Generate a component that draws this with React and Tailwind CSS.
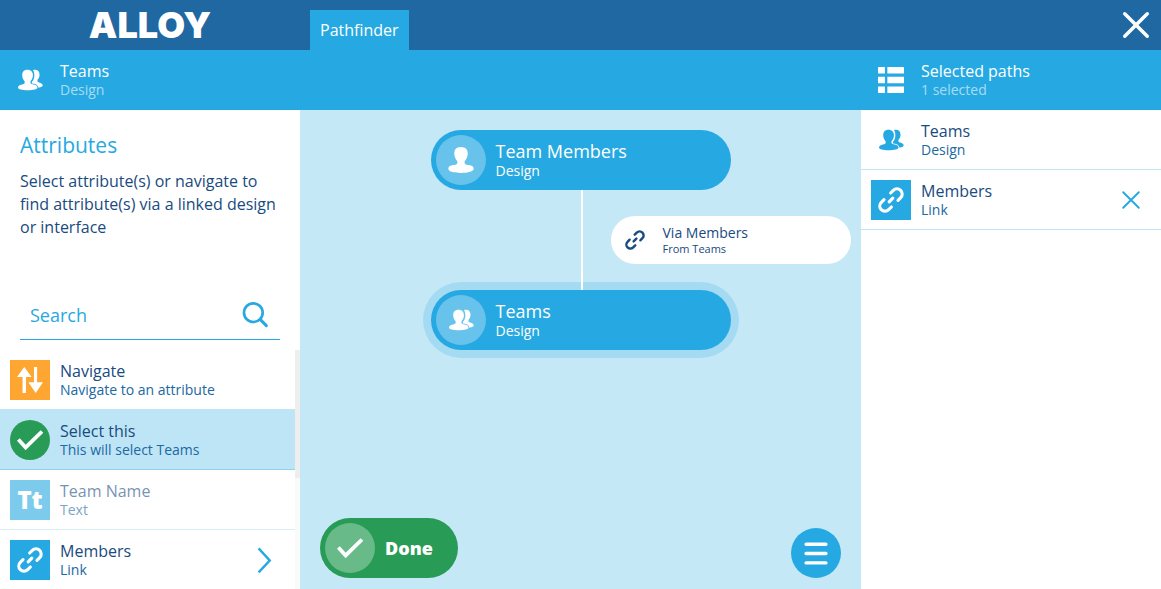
import clsx from "clsx";

const attributes = [
  { id: "navigate", title: "Navigate", subtitle: "Navigate to an attribute", icon: "navigate" },
  { id: "select", title: "Select this", subtitle: "This will select Teams", icon: "select", selected: true },
  { id: "name", title: "Team Name", subtitle: "Text", icon: "text", disabled: true },
  { id: "members", title: "Members", subtitle: "Link", icon: "link", expandable: true },
];

// Icons are drawn on a 75 unit grid
function Icon({ children, className = "size-[26px]" }) {
  return (
    <svg viewBox="0 0 75 75" className={clsx("shrink-0 overflow-visible", className)} fill="none" aria-hidden="true">
      {children}
    </svg>
  );
}

function TeamIcon() {
  return (
    <Icon>
      <g fill="currentColor">
        <path d="M30 8c10 0 16 6 16 16 0 7-3 13-7 17v6c2 3 8 3 14 5 5 2 6 5 6 8 0 4-12 7-28 7S3 64 3 60c0-3 1-6 7-8 6-2 10-2 12-5v-6c-4-4-7-10-7-17C15 14 20 8 30 8Z" />
        <path d="M46 9c2-1 4-1 6-1 8 0 13 5 13 14 0 6-2 11-6 15v5c2 3 6 3 10 5 4 2 5 4 5 6 0 4-4 6-12 7-1-6-5-9-10-11-5-1-8-1-9-3v-3c4-4 7-11 7-18 0-7-1-12-4-16Z" />
      </g>
    </Icon>
  );
}

function PersonIcon() {
  return (
    <Icon>
      <path
        fill="currentColor"
        d="M37 0C51 0 57 8 57 19c0 9-4 17-9 22v6c1 4 8 5 15 6 8 2 11 4 11 10 0 8-15 12-37 12S1 71 1 63c0-6 3-8 11-10 7-1 14-2 15-6v-6c-5-5-9-13-9-22C18 8 24 0 37 0Z"
      />
    </Icon>
  );
}

function LinkIcon({ className }) {
  return (
    <Icon className={className}>
      <g transform="rotate(-45 37.5 37.5)" stroke="currentColor" strokeWidth="9" strokeLinecap="round">
        <path d="M51 22.500H62a15 15 0 0 1 0 30H51" />
        <path d="M24 52.500H13a15 15 0 0 1 0-30H24" />
        <path d="M30 37.500h15" />
      </g>
    </Icon>
  );
}

function ListIcon() {
  return (
    <Icon>
      <path
        fill="currentColor"
        d="M2 0h18v19H0V2ZM27 0h46l2 2v17H27ZM0 28h20v19H0ZM27 28h48v19H27ZM0 56h20v19H2l-2-2ZM27 56h48v17l-2 2H27Z"
      />
    </Icon>
  );
}

function NavigateIcon() {
  return (
    <Icon>
      <path fill="currentColor" d="M21 0 42 29H26v46H16V29H0ZM49 0h9v44h17L54 75 33 44h16Z" />
    </Icon>
  );
}

function CheckIcon() {
  return (
    <Icon>
      <path d="M4 36 25 59 72 13" stroke="currentColor" strokeWidth="11" />
    </Icon>
  );
}

function MenuIcon() {
  return (
    <Icon>
      <path d="M9 12h57M9 39h57M9 66h57" stroke="currentColor" strokeWidth="10" strokeLinecap="round" />
    </Icon>
  );
}

function SearchIcon() {
  return (
    <Icon className="size-[25px]">
      <circle cx="31" cy="32" r="28" stroke="currentColor" strokeWidth="8" />
      <path d="M52 53 70 71" stroke="currentColor" strokeWidth="9" strokeLinecap="round" />
    </Icon>
  );
}

function CrossIcon({ className, strokeWidth }) {
  return (
    <Icon className={className}>
      <path d="M5 5 70 70M70 5 5 70" stroke="currentColor" strokeWidth={strokeWidth} strokeLinecap="round" />
    </Icon>
  );
}

function AttributeIcon({ type }) {
  const box = "flex size-10 shrink-0 items-center justify-center text-white";
  if (type === "navigate") return <span className={clsx(box, "bg-[#ffa632]")}><NavigateIcon /></span>;
  if (type === "select") return <span className={clsx(box, "rounded-full bg-[#289c56]")}><CheckIcon /></span>;
  if (type === "text") return <span className={clsx(box, "bg-[#26a9e2] text-2xl font-extrabold")}>Tt</span>;
  if (type === "link") return <span className={clsx(box, "bg-[#26a9e2]")}><LinkIcon /></span>;
  return <span className="flex size-10 shrink-0 items-center justify-center text-[#26a9e2]"><TeamIcon /></span>;
}

function RowText({ title, subtitle }) {
  return (
    <span className="block min-w-0 flex-1 text-left">
      <span className="block text-base leading-5 text-[#184b80]">{title}</span>
      <span className="block text-sm leading-[18px] text-[#2068a2]">{subtitle}</span>
    </span>
  );
}

function PanelHeader({ icon, title, subtitle, className }) {
  return (
    <div className={clsx("flex h-[60px] shrink-0 items-center gap-[10px] px-[10px] text-white", className)}>
      <span className="flex size-10 items-center justify-center">{icon}</span>
      <div>
        <h2 className="text-base leading-5">{title}</h2>
        <p className="text-sm leading-[18px] text-white/60">{subtitle}</p>
      </div>
    </div>
  );
}

function AttributeRow({ item }) {
  return (
    <li>
      <button
        type="button"
        disabled={item.disabled}
        className={clsx(
          "flex h-[60px] w-full items-center gap-[10px] border-b border-[#26a9e2]/30 px-[10px]",
          item.selected && "bg-[#26a9e2]/30",
          item.disabled && "opacity-60"
        )}
      >
        <AttributeIcon type={item.icon} />
        <RowText title={item.title} subtitle={item.subtitle} />
        {item.expandable && (
          <span className="mr-2 text-[#26a9e2]">
            <Icon>
              <path d="M22 4 54 39 22 73" stroke="currentColor" strokeWidth="7" />
            </Icon>
          </span>
        )}
      </button>
    </li>
  );
}

function DesignNode({ icon, title, active }) {
  return (
    <button
      type="button"
      className={clsx(
        "flex h-[60px] w-[300px] items-center gap-[10px] rounded-full bg-[#26a9e2] p-[5px] text-left text-white",
        active && "ring-8 ring-[#26a9e2]/20"
      )}
    >
      <span className="flex size-[50px] items-center justify-center rounded-full bg-white/30">{icon}</span>
      <span className="block">
        <span className="block text-lg leading-[22px]">{title}</span>
        <span className="block text-sm leading-[18px]">Design</span>
      </span>
    </button>
  );
}

export default function App() {
  return (
    <div className="flex h-screen flex-col overflow-hidden bg-white font-['Open_Sans',sans-serif]">
      {/* Top bar */}
      <header className="flex h-[50px] shrink-0 items-end bg-[#2068a2] text-white">
        <div className="flex h-full w-[300px] items-center justify-center font-['Inter',sans-serif] text-4xl font-black">
          ALLOY
        </div>
        <nav className="flex-1 px-[10px]">
          <button type="button" className="h-10 bg-[#26a9e2] px-[10px] text-base">
            Pathfinder
          </button>
        </nav>
        <button type="button" aria-label="Close" className="flex size-[50px] items-center justify-center">
          <CrossIcon strokeWidth={10} />
        </button>
      </header>

      {/* Panel headings */}
      <div className="flex justify-between bg-[#26a9e2]">
        <PanelHeader className="w-[300px]" icon={<TeamIcon />} title="Teams" subtitle="Design" />
        <PanelHeader className="w-[300px]" icon={<ListIcon />} title="Selected paths" subtitle="1 selected" />
      </div>

      <div className="flex min-h-0 flex-1">
        {/* Attributes */}
        <aside className="flex w-[300px] shrink-0 flex-col">
          <div className="px-5 pt-5">
            <h1 className="text-[21px] leading-[30px] text-[#26a9e2]">Attributes</h1>
            <p className="mt-[10px] text-base leading-[23px] text-[#184b80]">
              Select attribute(s) or navigate to find attribute(s) via a linked design or interface
            </p>
            <label className="mt-[51px] flex h-[50px] items-center border-b border-[#26a9e2] pr-3 pl-[10px] text-[#26a9e2]">
              <input
                type="text"
                aria-label="Search"
                placeholder="Search"
                className="min-w-0 flex-1 text-lg outline-none placeholder:text-[#26a9e2]"
              />
              <SearchIcon />
            </label>
          </div>
          <div className="mt-[10px] flex min-h-0 flex-1">
            <ul className="flex-1 overflow-hidden">
              {attributes.map((item) => (
                <AttributeRow key={item.id} item={item} />
              ))}
            </ul>
            <div className="w-[5px] bg-[#fafafa]">
              <div className="h-32 bg-[#eeeeee]" />
            </div>
          </div>
        </aside>

        {/* Path canvas */}
        <main className="flex min-w-0 flex-1 flex-col justify-between bg-[#c5e8f7] px-5 pt-5 pb-[11px]">
          <div className="flex flex-col items-center">
            <DesignNode icon={<PersonIcon />} title="Team Members" />
            {/* Connector with the link it follows */}
            <div className="flex h-[100px] w-[300px] justify-end">
              <div className="relative w-1/2 border-l-2 border-white">
                <div className="absolute top-[26px] left-7 flex h-12 w-60 items-center gap-[18px] rounded-full bg-white px-[14px] text-[#184b80]">
                  <LinkIcon className="size-5" />
                  <div>
                    <p className="text-sm leading-[18px]">Via Members</p>
                    <p className="text-[11px] leading-[14px]">From Teams</p>
                  </div>
                </div>
              </div>
            </div>
            <DesignNode icon={<TeamIcon />} title="Teams" active />
          </div>
          <div className="flex items-end justify-between">
            <button
              type="button"
              className="flex h-[60px] items-center gap-[10px] rounded-full bg-[#289c56] py-[5px] pr-[25px] pl-[5px] text-lg font-extrabold text-white"
            >
              <span className="flex size-[50px] items-center justify-center rounded-full bg-white/30">
                <CheckIcon />
              </span>
              Done
            </button>
            <button
              type="button"
              aria-label="Menu"
              className="flex size-[50px] items-center justify-center rounded-full bg-[#26a9e2] text-white"
            >
              <MenuIcon />
            </button>
          </div>
        </main>

        {/* Selected paths */}
        <aside className="w-[300px] shrink-0">
          <div className="flex h-[60px] items-center gap-[10px] border-b border-[#26a9e2]/30 px-[10px]">
            <AttributeIcon type="team" />
            <RowText title="Teams" subtitle="Design" />
          </div>
          <div className="flex h-[60px] items-center gap-[10px] border-b border-[#26a9e2]/30 px-[10px]">
            <AttributeIcon type="link" />
            <RowText title="Members" subtitle="Link" />
            <button type="button" aria-label="Remove Members" className="flex size-10 items-center justify-center text-[#26a9e2]">
              <CrossIcon className="size-[18px]" strokeWidth={8} />
            </button>
          </div>
        </aside>
      </div>
    </div>
  );
}
